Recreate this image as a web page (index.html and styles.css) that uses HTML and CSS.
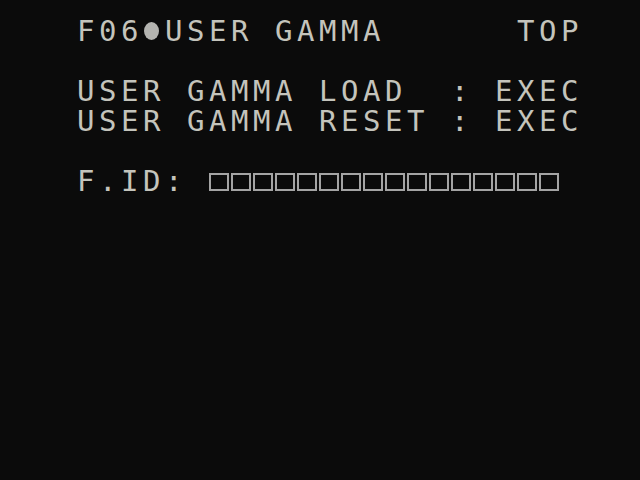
FILE: index.html
```html
<!DOCTYPE html>
<html>
<head>
<meta charset="utf-8">
<link rel="stylesheet" href="styles.css">
</head>
<body>
<div class="osd">
  <div class="row">F06<span class="dot-cell"><span class="dot"></span></span>USER GAMMA      TOP</div>
  <div class="row"></div>
  <div class="row">USER GAMMA LOAD  : EXEC</div>
  <div class="row">USER GAMMA RESET : EXEC</div>
  <div class="row"></div>
  <div class="row">F.ID: <span class="boxes"><span class="box"></span><span class="box"></span><span class="box"></span><span class="box"></span><span class="box"></span><span class="box"></span><span class="box"></span><span class="box"></span><span class="box"></span><span class="box"></span><span class="box"></span><span class="box"></span><span class="box"></span><span class="box"></span><span class="box"></span><span class="box"></span></span></div>
</div>
</body>
</html>
```
FILE: styles.css
```css
html, body {
  margin: 0;
  padding: 0;
  background: #0b0b0b;
  width: 640px;
  height: 480px;
  overflow: hidden;
}
.osd {
  padding: 16px 0 0 77px;
  font-family: "DejaVu Sans Mono", monospace;
  font-size: 29px;
  letter-spacing: 4.54px;
  color: #c4c4bc;
}
.row {
  height: 30px;
  line-height: 30px;
  white-space: pre;
}
.dot-cell {
  display: inline-block;
  width: 22px;
  height: 30px;
  vertical-align: top;
  position: relative;
}
.dot {
  position: absolute;
  left: 1px;
  top: 6px;
  width: 15px;
  height: 18px;
  border-radius: 50%;
  background: #b4b4b0;
}
.boxes {
  display: inline-flex;
  vertical-align: top;
  height: 30px;
  align-items: flex-start;
}
.box {
  display: inline-block;
  box-sizing: border-box;
  width: 20px;
  height: 18px;
  margin: 7px 2px 0 0;
  border: 2px solid #a4a4a4;
}
```
